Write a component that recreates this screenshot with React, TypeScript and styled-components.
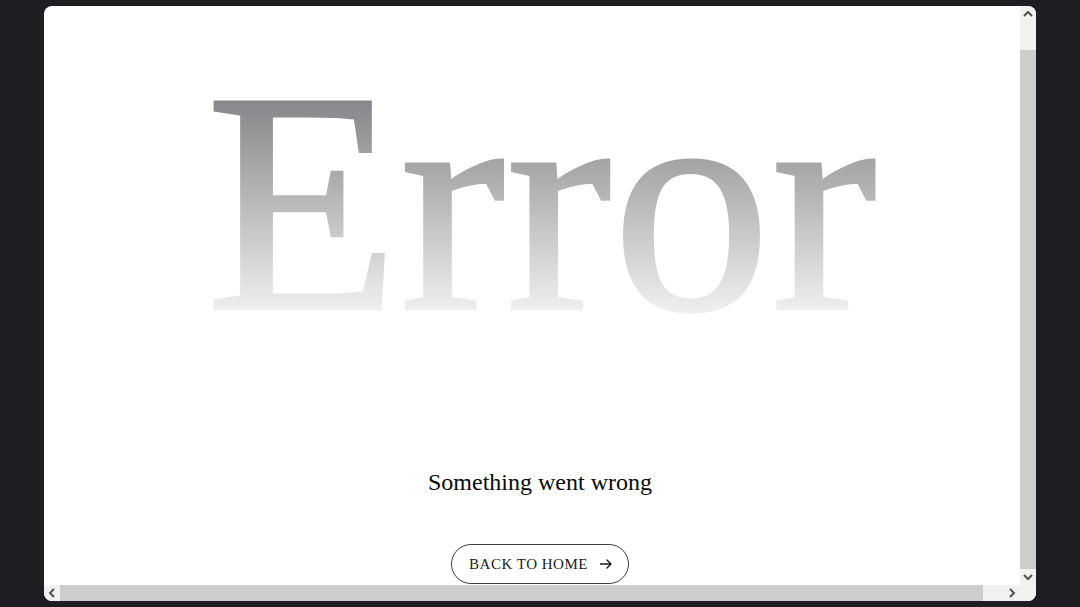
import styled, { createGlobalStyle } from 'styled-components';

const GlobalStyle = createGlobalStyle`
  html, body {
    margin: 0;
    padding: 0;
    background: #1e1d22;
  }

  body {
    font-family: 'Liberation Serif', 'Times New Roman', serif;
  }
`;

type Dir = 'up' | 'down' | 'left' | 'right';

const chevronPaths: Record<Dir, string> = {
  up: 'M1 6 L5 2 L9 6',
  down: 'M1 2 L5 6 L9 2',
  left: 'M6 1 L2 5 L6 9',
  right: 'M2 1 L6 5 L2 9'
};

function Chevron({ dir }: { dir: Dir }) {
  const vertical = dir === 'up' || dir === 'down';
  return (
    <svg
      width={vertical ? 10 : 8}
      height={vertical ? 8 : 10}
      viewBox={vertical ? '0 0 10 8' : '0 0 8 10'}
      fill='none'>
      <path d={chevronPaths[dir]} stroke='#505050' strokeWidth='2' />
    </svg>
  );
}

function ArrowGlyph() {
  return (
    <svg width='12' height='10' viewBox='0 0 12 10' fill='none'>
      <path
        d='M0.5 5 H11 M7 1 L11 5 L7 9'
        stroke='#1a1a1a'
        strokeWidth='1.4'
        strokeLinecap='round'
        strokeLinejoin='round'
      />
    </svg>
  );
}

export default function App() {
  return (
    <>
      <GlobalStyle />
      <Screen>
        <Frame>
          <Viewport>
            <Page>
              <Headline>Error</Headline>
              <Message>Something went wrong</Message>
              <HomeButton type='button'>
                <span>Back to home</span>
                <ArrowGlyph />
              </HomeButton>
            </Page>
          </Viewport>

          <VerticalBar>
            <ArrowCell>
              <Chevron dir='up' />
            </ArrowCell>
            <Track $vertical $before={28}>
              <Thumb />
            </Track>
            <ArrowCell>
              <Chevron dir='down' />
            </ArrowCell>
          </VerticalBar>

          <HorizontalBar>
            <ArrowCell>
              <Chevron dir='left' />
            </ArrowCell>
            <Track $after={21}>
              <Thumb />
            </Track>
            <ArrowCell>
              <Chevron dir='right' />
            </ArrowCell>
          </HorizontalBar>

          <Corner />
        </Frame>
      </Screen>
    </>
  );
}

const Screen = styled.main`
  padding: 6px 44px;
  height: 607px;
  box-sizing: border-box;
`;

const Frame = styled.div`
  width: 992px;
  height: 595px;
  border-radius: 8px;
  overflow: hidden;
  background: #ffffff;
  display: grid;
  grid-template-columns: 1fr 16px;
  grid-template-rows: 1fr 16px;
`;

const Viewport = styled.div`
  overflow: hidden;
`;

const Page = styled.div`
  width: 992px;
  display: flex;
  flex-direction: column;
  align-items: center;
  padding-top: 36px;
`;

// gradient title; a thin stroke gives the glyphs a little more weight
const Headline = styled.h1`
  margin: 0 0 106px;
  width: 672px;
  padding-left: 2px;
  box-sizing: border-box;
  font-family: 'Liberation Serif', 'Times New Roman', serif;
  font-weight: 400;
  font-size: 316px;
  line-height: 320px;
  letter-spacing: 1px;
  white-space: nowrap;
  background: linear-gradient(to bottom, #69696e 0%, #ffffff 94%);
  -webkit-background-clip: text;
  background-clip: text;
  color: transparent;
  -webkit-text-fill-color: transparent;
  -webkit-text-stroke: 3px transparent;
`;

const Message = styled.p`
  margin: 0 0 48px;
  font-size: 24px;
  line-height: 28px;
  color: #0a0a0a;
`;

const HomeButton = styled.button`
  display: flex;
  align-items: center;
  gap: 12px;
  height: 40px;
  padding: 0 16px 0 17px;
  box-sizing: border-box;
  border: 1px solid #3c3c3c;
  border-radius: 20px;
  background: #ffffff;
  color: #1a1a1a;
  font-family: 'Liberation Serif', 'Times New Roman', serif;
  font-size: 15px;
  letter-spacing: 0.5px;
  text-transform: uppercase;
  cursor: pointer;
`;

const VerticalBar = styled.div`
  display: flex;
  flex-direction: column;
  background: #f1f1f1;
`;

const HorizontalBar = styled.div`
  display: flex;
  background: #f1f1f1;
`;

const ArrowCell = styled.div`
  flex: 0 0 16px;
  height: 16px;
  width: 16px;
  display: grid;
  place-items: center;
`;

const Track = styled.div<{ $vertical?: boolean; $before?: number; $after?: number }>`
  flex: 1;
  display: flex;
  flex-direction: ${({ $vertical }) => ($vertical ? 'column' : 'row')};
  padding-${({ $vertical }) => ($vertical ? 'top' : 'left')}: ${({ $before = 0 }) => $before}px;
  padding-${({ $vertical }) => ($vertical ? 'bottom' : 'right')}: ${({ $after = 0 }) => $after}px;
`;

const Thumb = styled.div`
  flex: 1;
  background: #cdcdcd;
`;

const Corner = styled.div`
  background: #f1f1f1;
`;
